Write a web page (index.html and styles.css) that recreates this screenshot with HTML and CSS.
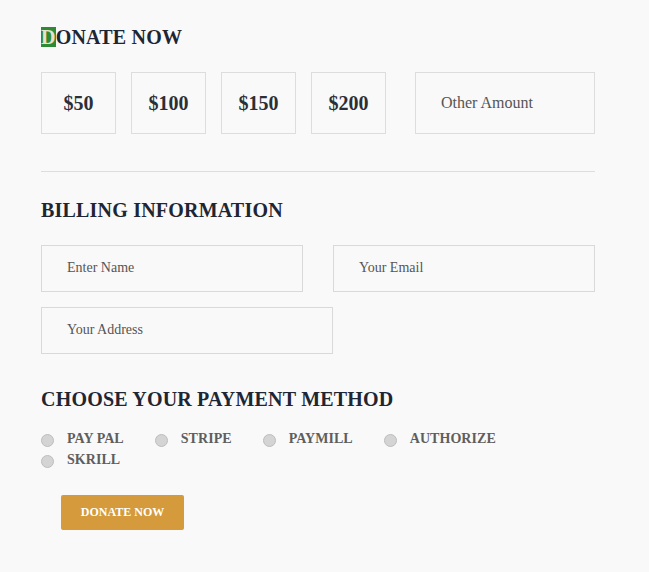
FILE: index.html
```html
<!DOCTYPE html>
<html>
<head>
<meta charset="utf-8">
<link rel="stylesheet" href="styles.css">
</head>
<body>
<div class="page">
  <h2 class="title"><span class="hl">D</span>ONATE NOW</h2>
  <div class="amounts">
    <div class="amt">$50</div>
    <div class="amt">$100</div>
    <div class="amt">$150</div>
    <div class="amt">$200</div>
    <div class="other">Other Amount</div>
  </div>
  <hr class="divider">
  <h2 class="title billing">BILLING INFORMATION</h2>
  <div class="fields">
    <div class="row">
      <div class="field half">Enter Name</div>
      <div class="field half">Your Email</div>
    </div>
    <div class="row">
      <div class="field address">Your Address</div>
    </div>
  </div>
  <h2 class="title payment">CHOOSE YOUR PAYMENT METHOD</h2>
  <div class="methods">
    <label class="method"><span class="radio"></span>PAY PAL</label>
    <label class="method"><span class="radio"></span>STRIPE</label>
    <label class="method"><span class="radio"></span>PAYMILL</label>
    <label class="method"><span class="radio"></span>AUTHORIZE</label>
    <label class="method"><span class="radio"></span>SKRILL</label>
  </div>
  <button class="donate">DONATE NOW</button>
</div>
</body>
</html>
```
FILE: styles.css
```css
html, body {
  margin: 0;
  padding: 0;
  background: #f9f9f9;
}
body {
  font-family: "Liberation Serif", "Times New Roman", serif;
  color: #222;
}
.page {
  width: 554px;
  padding: 27px 0 40px 41px;
}
.title {
  margin: 0;
  font-size: 20px;
  line-height: 20px;
  font-weight: bold;
  color: #1f2633;
  letter-spacing: 0.2px;
}
.hl {
  display: inline-block;
  background: #2f8a35;
  color: #e6e2cf;
  height: 20px;
  line-height: 20px;
}
.amounts {
  display: flex;
  margin-top: 25px;
}
.amt {
  box-sizing: border-box;
  width: 75px;
  height: 62px;
  border: 1px solid #dddddd;
  margin-right: 15px;
  display: flex;
  align-items: center;
  justify-content: center;
  font-size: 20px;
  font-weight: bold;
  color: #2a2f38;
}
.other {
  box-sizing: border-box;
  width: 180px;
  height: 62px;
  border: 1px solid #dddddd;
  margin-left: 14px;
  padding-left: 25px;
  display: flex;
  align-items: center;
  font-size: 16px;
  color: #555;
}
.divider {
  border: 0;
  border-top: 1px solid #dddddd;
  margin: 37px 0 0 0;
  width: 554px;
}
.billing {
  margin-top: 28px;
}
.fields {
  margin-top: 25px;
  display: flex;
  flex-direction: column;
  gap: 15px;
}
.row {
  display: flex;
  gap: 30px;
}
.field {
  box-sizing: border-box;
  height: 47px;
  border: 1px solid #d9d9d9;
  padding-left: 25px;
  padding-bottom: 1px;
  display: flex;
  align-items: center;
  font-size: 14px;
  color: #555;
}
.half {
  width: 262px;
}
.address {
  width: 292px;
}
.payment {
  margin-top: 35px;
}
.methods {
  margin-top: 19px;
  display: flex;
  flex-wrap: wrap;
  width: 554px;
}
.method {
  display: flex;
  align-items: center;
  height: 21px;
  margin-right: 31px;
  font-size: 14px;
  letter-spacing: 0.05px;
  font-weight: bold;
  color: #5e5e5e;
}
.radio {
  box-sizing: border-box;
  width: 13px;
  height: 13px;
  border-radius: 50%;
  background: #d4d4d4;
  border: 1px solid #bdbdbd;
  margin-right: 13px;
  margin-top: 3px;
}
.donate {
  display: block;
  margin: 25px 0 0 20px;
  width: 123px;
  height: 35px;
  background: #d49a3b;
  border: 0;
  border-radius: 2px;
  color: #fff;
  font-family: "Liberation Serif", "Times New Roman", serif;
  font-size: 12px;
  font-weight: bold;
  padding: 0;
}
```
